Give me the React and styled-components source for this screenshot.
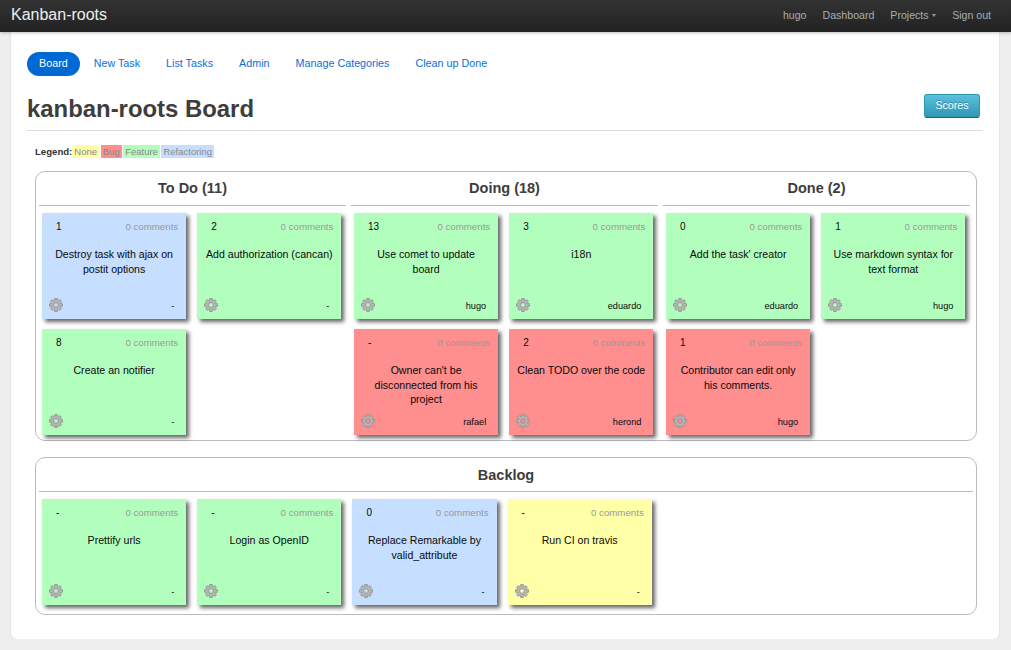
import React from 'react';
import styled, { createGlobalStyle } from 'styled-components';

const COLORS = {
  none: '#ffffa8',
  bug: '#ff8e8e',
  feature: '#b2ffbd',
  refactoring: '#c6deff',
};

const todo = [
  { n: '1', title: 'Destroy task with ajax on postit options', who: '-', kind: 'refactoring' },
  { n: '2', title: 'Add authorization (cancan)', who: '-', kind: 'feature' },
  { n: '8', title: 'Create an notifier', who: '-', kind: 'feature' },
];
const doing = [
  { n: '13', title: 'Use comet to update\nboard', who: 'hugo', kind: 'feature' },
  { n: '3', title: 'i18n', who: 'eduardo', kind: 'feature' },
  { n: '-', title: "Owner can't be disconnected from his project", who: 'rafael', kind: 'bug' },
  { n: '2', title: 'Clean TODO over the code', who: 'herond', kind: 'bug' },
];
const done = [
  { n: '0', title: "Add the task' creator", who: 'eduardo', kind: 'feature' },
  { n: '1', title: 'Use markdown syntax for text format', who: 'hugo', kind: 'feature' },
  { n: '1', title: 'Contributor can edit only his comments.', who: 'hugo', kind: 'bug' },
];
const backlog = [
  { n: '-', title: 'Prettify urls', who: '-', kind: 'feature' },
  { n: '-', title: 'Login as OpenID', who: '-', kind: 'feature' },
  { n: '0', title: 'Replace Remarkable by valid_attribute', who: '-', kind: 'refactoring' },
  { n: '-', title: 'Run CI on travis', who: '-', kind: 'none' },
];

// 8 teeth gear outline, with the hole cut by evenodd
const gearPath = (() => {
  const pts = [];
  for (let i = 0; i < 8; i++) {
    const a = (i * Math.PI) / 4;
    [[-0.3, 4.9], [-0.2, 6.6], [0.2, 6.6], [0.3, 4.9]].forEach(([da, r]) => {
      pts.push(`${(7 + r * Math.sin(a + da)).toFixed(2)} ${(7 - r * Math.cos(a + da)).toFixed(2)}`);
    });
  }
  return `M${pts.join('L')}Z M7 4.7a2.3 2.3 0 1 0 0 4.6a2.3 2.3 0 1 0 0-4.6Z`;
})();

const GearIcon = () => (
  <GearSvg width="14" height="14" viewBox="0 0 14 14">
    <path d={gearPath} fill="#b5b5b5" fillRule="evenodd" stroke="#888888" strokeWidth="0.7" />
  </GearSvg>
);

const Task = ({ n, title, who, kind }) => (
  <Card $kind={kind}>
    <CardHead>
      <Points>{n}</Points>
      <Comments>0 comments</Comments>
    </CardHead>
    <CardTitle>{title}</CardTitle>
    <CardFoot>
      <GearIcon />
      <Owner>{who}</Owner>
    </CardFoot>
  </Card>
);

const App = () => (
  <>
    <GlobalStyle />
    <Navbar>
      <Brand>Kanban-roots</Brand>
      <NavLinks>
        <NavLink>hugo</NavLink>
        <NavLink>Dashboard</NavLink>
        <NavLink>
          Projects
          <Caret />
        </NavLink>
        <NavLink>Sign out</NavLink>
      </NavLinks>
    </Navbar>
    <Container>
      <Pills>
        <Pill $active>Board</Pill>
        <Pill>New Task</Pill>
        <Pill>List Tasks</Pill>
        <Pill>Admin</Pill>
        <Pill>Manage Categories</Pill>
        <Pill>Clean up Done</Pill>
      </Pills>
      <PageHeader>
        <Heading>kanban-roots Board</Heading>
        <ScoresButton>Scores</ScoresButton>
      </PageHeader>
      <Legend>
        <LegendLabel>Legend:</LegendLabel>
        <LegendTag $kind="none">None</LegendTag>
        <LegendTag $kind="bug">Bug</LegendTag>
        <LegendTag $kind="feature">Feature</LegendTag>
        <LegendTag $kind="refactoring">Refactoring</LegendTag>
      </Legend>
      <BoardBox>
        <Columns>
          <Column>
            <ColumnTitle>To Do (11)</ColumnTitle>
            <CardList>{todo.map((t) => <Task key={t.title} {...t} />)}</CardList>
          </Column>
          <Column>
            <ColumnTitle>Doing (18)</ColumnTitle>
            <CardList>{doing.map((t) => <Task key={t.title} {...t} />)}</CardList>
          </Column>
          <Column>
            <ColumnTitle>Done (2)</ColumnTitle>
            <CardList>{done.map((t) => <Task key={t.title} {...t} />)}</CardList>
          </Column>
        </Columns>
      </BoardBox>
      <BacklogBox>
        <BacklogTitle>Backlog</BacklogTitle>
        <CardList>{backlog.map((t) => <Task key={t.title} {...t} />)}</CardList>
      </BacklogBox>
    </Container>
  </>
);

export default App;

const GlobalStyle = createGlobalStyle`
  html, body {
    margin: 0;
    padding: 0;
    background: #eeeeee;
    font-family: "Liberation Sans", Arial, sans-serif;
    font-size: 11px;
    color: #333;
  }
`;

const Navbar = styled.div`
  height: 32px;
  box-sizing: border-box;
  display: flex;
  align-items: center;
  justify-content: space-between;
  padding: 0 20px 0 11px;
  background: linear-gradient(#333333, #222222);
  box-shadow: 0 1px 3px rgba(0, 0, 0, 0.25);
  position: relative;
`;

const Brand = styled.div`
  font-size: 16px;
  color: #eeeeee;
  margin-top: -3px;
`;

const NavLinks = styled.div`
  display: flex;
  gap: 16px;
  margin-top: -2px;
`;

const NavLink = styled.div`
  font-size: 10.6px;
  color: #a9adb2;
  display: flex;
  align-items: center;
`;

const Caret = styled.span`
  width: 0;
  height: 0;
  margin-left: 3.5px;
  border-left: 2.5px solid transparent;
  border-right: 2.5px solid transparent;
  border-top: 3px solid #999;
`;

const Container = styled.div`
  margin: 0 12px 0 11px;
  height: 607px;
  box-sizing: border-box;
  background: #fff;
  border-radius: 0 0 6px 6px;
  box-shadow: 0 0 2px rgba(0, 0, 0, 0.12);
  padding: 20px 16px 0;
`;

const Pills = styled.div`
  display: flex;
  gap: 2px;
  height: 24px;
  align-items: center;
`;

const Pill = styled.div`
  height: 24px;
  line-height: 23px;
  padding: 0 12px;
  font-size: 10.75px;
  border-radius: 12px;
  color: ${(p) => (p.$active ? '#fff' : '#0a6fd8')};
  background: ${(p) => (p.$active ? '#0069d4' : 'transparent')};
`;

const PageHeader = styled.div`
  display: flex;
  align-items: flex-start;
  justify-content: space-between;
  box-sizing: content-box;
  height: 36px;
  padding-top: 18px;
  border-bottom: 1px solid #dddddd;
`;

const Heading = styled.h1`
  margin: 0;
  font-size: 23.9px;
  line-height: 30px;
  font-weight: bold;
  color: #3d3d3d;
`;

const ScoresButton = styled.button`
  width: 56px;
  height: 24px;
  margin: 0 3px 0 0;
  padding: 0 0 2px;
  font-family: inherit;
  font-size: 10.6px;
  color: #fff;
  text-shadow: 0 -1px 0 rgba(0, 0, 0, 0.25);
  border: 1px solid #2f96b4;
  border-bottom-color: #1f6377;
  border-radius: 3px;
  background: linear-gradient(#5bc0de, #2f96b4);
`;

const Legend = styled.div`
  display: flex;
  align-items: stretch;
  height: 13px;
  margin: 14px 0 13px 8px;
  font-size: 9.5px;
  line-height: 14px;
`;

const LegendLabel = styled.span`
  font-size: 9.6px;
  font-weight: bold;
  color: #333;
`;

const LegendTag = styled.span`
  padding: 0 2px;
  margin-right: 1.6px;
  color: #888;
  background: ${(p) => COLORS[p.$kind]};
`;

const Box = styled.div`
  width: 942px;
  margin-left: 8px;
  box-sizing: border-box;
  border: 1px solid #bbbbbb;
  border-radius: 10px;
  padding: 0 3px;
`;

const BoardBox = styled(Box)`
  height: 270px;
`;

const BacklogBox = styled(Box)`
  height: 158px;
  margin-top: 16px;
`;

const Columns = styled.div`
  display: grid;
  grid-template-columns: 307px 307px 307px;
  column-gap: 5px;
`;

const Column = styled.div``;

const ColumnTitle = styled.div`
  height: 33px;
  line-height: 32px;
  text-align: center;
  font-size: 14.5px;
  font-weight: bold;
  color: #3d3d3d;
  border-bottom: 1px solid #bbbbbb;
`;

const BacklogTitle = styled(ColumnTitle)`
  line-height: 34px;
`;

const CardList = styled.div`
  display: flex;
  flex-wrap: wrap;
  gap: 10.4px 11px;
  padding: 7px 3px 0;
`;

const Card = styled.div`
  width: 144.2px;
  height: 105.6px;
  box-sizing: border-box;
  padding: 7px 8px 6px 8px;
  display: flex;
  flex-direction: column;
  color: #0a0a0a;
  background: ${(p) => COLORS[p.$kind]};
  box-shadow: 3px 3px 4px rgba(0, 0, 0, 0.6);
`;

const CardHead = styled.div`
  display: flex;
  justify-content: space-between;
  align-items: baseline;
  height: 13px;
  line-height: 13px;
`;

const Points = styled.span`
  margin-left: 6px;
  font-size: 10px;
`;

const Comments = styled.span`
  font-size: 9.7px;
  color: #999;
`;

const CardTitle = styled.div`
  flex: 1;
  margin: 14.3px 0 0;
  font-size: 10.6px;
  line-height: 14.6px;
  text-align: center;
  white-space: pre-line;
`;

const CardFoot = styled.div`
  display: flex;
  justify-content: space-between;
  align-items: center;
  height: 15px;
`;

const GearSvg = styled.svg`
  margin-left: -1px;
`;

const Owner = styled.span`
  margin: 1px 4px 0 0;
  font-size: 9.2px;
`;
